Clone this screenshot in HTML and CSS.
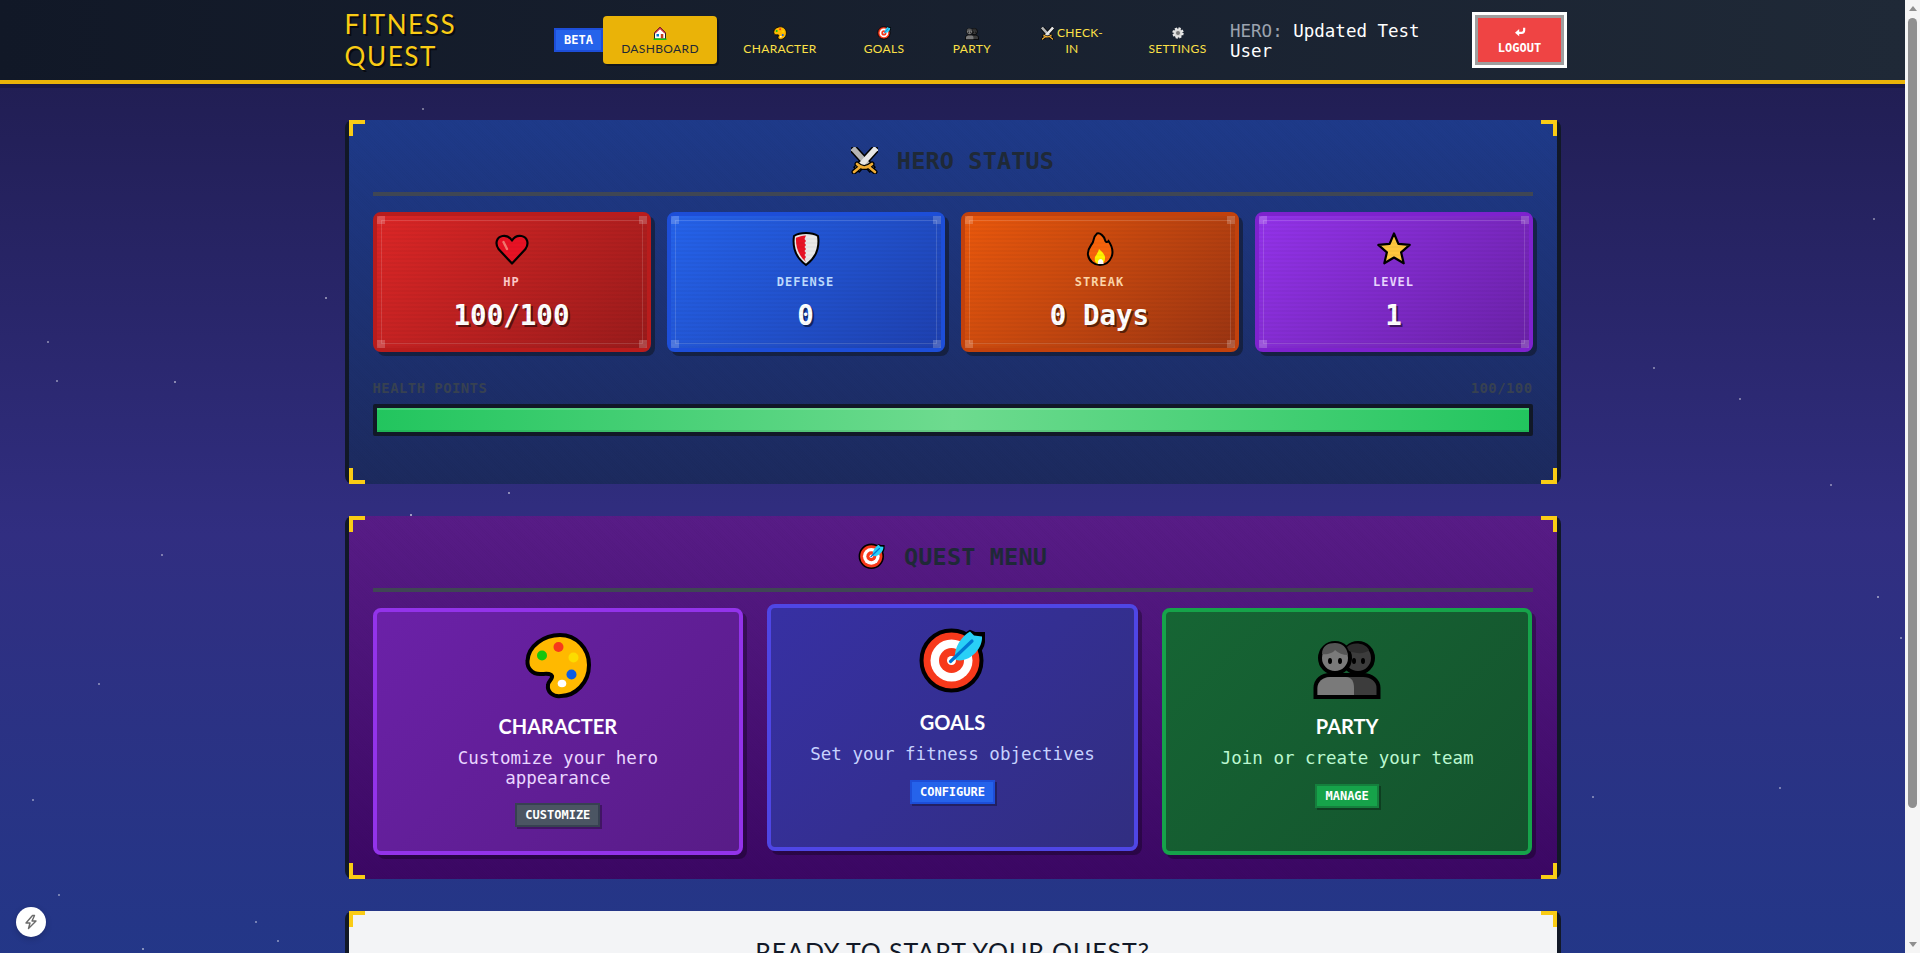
FILE: index.html
```html
<!DOCTYPE html>
<html lang="en">
<head>
<meta charset="utf-8">
<title>Fitness Quest</title>
<link rel="stylesheet" href="styles.css">
</head>
<body>
<svg class="sprite" xmlns="http://www.w3.org/2000/svg">
  <symbol id="i-swords" viewBox="0 0 27 27">
    <g stroke-linecap="round">
      <path d="M3.500 3 L19 20" stroke="#000" stroke-width="8.500" stroke-linecap="square"/>
      <path d="M23.500 3 L8 20" stroke="#000" stroke-width="8.500" stroke-linecap="square"/>
      <path d="M3.500 3 L19 20" stroke="#b5b5b5" stroke-width="5.500" stroke-linecap="square"/>
      <path d="M23.500 3 L8 20" stroke="#e6e6e6" stroke-width="5.500" stroke-linecap="square"/>
      <path d="M6 17 Q13 24 21 17 M3 25 L9 20 M24 25 L18 20" stroke="#000" stroke-width="5" fill="none"/>
      <path d="M6 17 Q13 24 21 17 M3 25 L9 20 M24 25 L18 20" stroke="#f0ad35" stroke-width="2.600" fill="none"/>
    </g>
  </symbol>
  <symbol id="i-heart" viewBox="0 0 36 36">
    <path d="M18 32.500 L4.500 18 C0.500 12 3 6 8.500 5 C12.500 4.300 16 6.300 18 9.500 C20 6.300 23.500 4.300 27.500 5 C33 6 35.500 12 31.500 18 Z" fill="#e81224" stroke="#000" stroke-width="2.200" stroke-linejoin="round"/>
    <path d="M9.500 11 L13 18" stroke="#f4796f" stroke-width="2.400" stroke-linecap="round"/>
  </symbol>
  <symbol id="i-shield" viewBox="0 0 36 36">
    <path d="M18 2 C22 2 27 3 30 5 C31.500 15 29 26 18 34 C7 26 4.500 15 6 5 C9 3 14 2 18 2Z" fill="#e9e9e9" stroke="#000" stroke-width="2"/>
    <path d="M18 4.500 C14 4.500 11 5.500 8 6.800 C7.500 15 10 24 18 31 L16.500 28 L18 26 L16.500 24 L18 22 L16.500 20 L18 18 L16.500 16 L18 14 L16.500 12 L18 10 L16.500 8Z" fill="#e81224"/>
  </symbol>
  <symbol id="i-flame" viewBox="0 0 36 36">
    <path d="M15 2.500 C18 1.500 22 5 23 9 C23.500 11 25 12 26.500 10 C30 15 31.500 21 29.500 26 C27.500 31 23 34 18 34 C12 34 7 30 6 24 C5 18 9 15 11 11 C12 8 12 5 15 2.500Z" fill="#f7630c" stroke="#000" stroke-width="2"/>
    <path d="M17 18 C19 20 22.500 22.500 23 26 C23.500 30 21 33 18 33 C14 33 12 30 13 26 C14 24 16 22 17 18Z" fill="#fff100"/>
    <path d="M18.500 28 C20.500 28 21.500 30 21.500 33 H16 C15.500 31 16.500 28 18.500 28Z" fill="#fff"/>
  </symbol>
  <symbol id="i-star" viewBox="0 0 36 36">
    <polygon points="18,2.500 22.400,12.900 33.700,13.900 25.100,21.300 27.700,32.300 18,26.500 8.300,32.300 10.900,21.300 2.300,13.900 13.600,12.900" fill="#ffc83d" stroke="#000" stroke-width="2.200" stroke-linejoin="round"/>
  </symbol>
  <symbol id="i-palette" viewBox="0 0 68 68">
    <path d="M36 4 C52 4 65 17 65 34 C65 52 51 65 37 65 C29 66 23 61 24 54 C24 50 29 48 28 45 C27 42 22 43 16 43 C8 43 3 37 3.500 30 C4 15 20 4 36 4Z" fill="#ffb900" stroke="#000" stroke-width="4"/>
    <circle cx="34.500" cy="16" r="5" fill="#f7391b"/>
    <circle cx="18" cy="24.500" r="5" fill="#16c60c"/>
    <circle cx="49.500" cy="26.500" r="5" fill="#fcdc00"/>
    <circle cx="47.500" cy="43.500" r="5" fill="#0b5ce6"/>
    <ellipse cx="38" cy="52.500" rx="4.300" ry="3.800" fill="#fff"/>
  </symbol>
  <symbol id="i-target" viewBox="0 0 68 68">
    <path d="M37 30 C37 20 44 9 52 5 L57 7 L65 7 L65 15 C64 25 50 35 39 34Z" fill="#000" stroke="#000" stroke-width="4"/>
    <circle cx="33.500" cy="33.500" r="30" fill="#f7391b" stroke="#000" stroke-width="4"/>
    <circle cx="33.500" cy="33.500" r="21" fill="#fff"/>
    <circle cx="33.500" cy="33.500" r="12.500" fill="#f7391b"/>
    <circle cx="33.500" cy="33.500" r="4.500" fill="#fff"/>
    <path d="M37 31 C36 20 44 9 52 4.500 L56 8.500 L64 9.500 C65 21 52 36 38 33Z" fill="#29d0f7"/>
    <path d="M32.500 34.500 L54 14" stroke="#0078d4" stroke-width="3.200" stroke-linecap="round"/>
  </symbol>
  <symbol id="i-people" viewBox="0 0 68 68">
    <path d="M2.500 66 V57 C2.500 49 9 44 17 44 H50 C58 44 65.500 49 65.500 57 V66Z" fill="#3c3c3c" stroke="#000" stroke-width="4"/>
    <circle cx="45" cy="27" r="15" fill="#3c3c3c" stroke="#000" stroke-width="4"/>
    <circle cx="22" cy="27" r="15" fill="#7a7a7a" stroke="#000" stroke-width="4"/>
    <path d="M9 23 C9 15 15 12 22 12 C29 12 34 16 35 24 C30 24 25 22 22 19 C20 22 14 24 9 23Z" fill="#555"/>
    <path d="M34 16 C38 11 52 11 56 19 C52 23 44 23 36 20Z" fill="#2c2c2c"/>
    <path d="M4.500 64 V57 C4.500 51 10 46 17 46 H33 C39 46 41 51 41 57 V64Z" fill="#7a7a7a"/>
    <ellipse cx="17" cy="30" rx="2" ry="3" fill="#000"/>
    <ellipse cx="27" cy="30" rx="2" ry="3" fill="#000"/>
    <ellipse cx="41" cy="30" rx="2" ry="3" fill="#000"/>
    <ellipse cx="50" cy="30" rx="2" ry="3" fill="#000"/>
  </symbol>
  <symbol id="i-house" viewBox="0 0 14 14">
    <path d="M7 1 L1.500 6.500 V13 H12.500 V6.500Z" fill="#fff" stroke="#222" stroke-width="1"/>
    <path d="M7 1 L1 7 L2.500 7.500 L7 3.300 L11.500 7.500 L13 7Z" fill="#d13438"/>
    <rect x="3.500" y="8" width="2.500" height="2.500" fill="#0078d4"/>
    <rect x="7.800" y="8" width="2.500" height="4.500" fill="#c43e1c"/>
    <rect x="0.500" y="12.500" width="13" height="1.500" fill="#16c60c"/>
  </symbol>
  <symbol id="i-gear" viewBox="0 0 14 14">
    <circle cx="7" cy="7" r="4.500" fill="#d9d9d9" stroke="#e8e8e8" stroke-width="2.400" stroke-dasharray="2.100 1.430"/>
    <circle cx="7" cy="7" r="2" fill="#777"/>
  </symbol>
  <symbol id="i-return" viewBox="0 0 14 12">
    <path d="M12 1 V4 C12 6 11 7 9 7 H4" fill="none" stroke="#fff" stroke-width="2.600"/>
    <path d="M6 2.500 L1 7 L6 11Z" fill="#fff"/>
  </symbol>
  <symbol id="i-bolt" viewBox="0 0 16 16">
    <path d="M9.500 1.500 L3 9 H7 L5.500 14.500 L13 7 H9 L11.500 1.500Z" fill="none" stroke="#6b6b6b" stroke-width="1.400" stroke-linejoin="round"/>
  </symbol>
</svg>

<div class="stars"></div>

<header class="topbar">
  <div class="topbar-inner">
    <div class="logo">FITNESS QUEST</div>
    <span class="beta">BETA</span>
    <nav class="nav">
      <a class="nav-link nav-link-active"><svg class="nav-icon"><use href="#i-house"/></svg>DASHBOARD</a>
      <a class="nav-link"><svg class="nav-icon"><use href="#i-palette"/></svg>CHARACTER</a>
      <a class="nav-link"><svg class="nav-icon"><use href="#i-target"/></svg>GOALS</a>
      <a class="nav-link"><svg class="nav-icon"><use href="#i-people"/></svg>PARTY</a>
      <a class="nav-link"><span class="nav-line"><svg class="nav-icon-inline"><use href="#i-swords"/></svg>CHECK-</span><span>IN</span></a>
      <a class="nav-link"><svg class="nav-icon"><use href="#i-gear"/></svg>SETTINGS</a>
    </nav>
    <div class="hero-name"><span class="hero-tag">HERO:</span> Updated Test User</div>
    <button class="logout"><svg class="logout-icon"><use href="#i-return"/></svg>LOGOUT</button>
  </div>
</header>

<main class="main">
  <section class="panel">
    <div class="panel-body panel-blue">
      <i class="corner corner-tl"></i><i class="corner corner-tr"></i><i class="corner corner-bl"></i><i class="corner corner-br"></i>
      <h2 class="panel-title"><svg class="title-icon"><use href="#i-swords"/></svg><span class="title-text">HERO STATUS</span></h2>
      <div class="stats">
        <div class="stat stat-red">
          <svg class="stat-icon"><use href="#i-heart"/></svg>
          <div class="stat-label">HP</div>
          <div class="stat-value">100/100</div>
        </div>
        <div class="stat stat-blue">
          <svg class="stat-icon"><use href="#i-shield"/></svg>
          <div class="stat-label">DEFENSE</div>
          <div class="stat-value">0</div>
        </div>
        <div class="stat stat-orange">
          <svg class="stat-icon"><use href="#i-flame"/></svg>
          <div class="stat-label">STREAK</div>
          <div class="stat-value">0 Days</div>
        </div>
        <div class="stat stat-purple">
          <svg class="stat-icon"><use href="#i-star"/></svg>
          <div class="stat-label">LEVEL</div>
          <div class="stat-value">1</div>
        </div>
      </div>
      <div class="hp-head"><span>HEALTH POINTS</span><span>100/100</span></div>
      <div class="hp-track"><div class="hp-fill"></div></div>
    </div>
  </section>

  <section class="panel">
    <div class="panel-body panel-violet">
      <i class="corner corner-tl"></i><i class="corner corner-tr"></i><i class="corner corner-bl"></i><i class="corner corner-br"></i>
      <h2 class="panel-title"><svg class="title-icon"><use href="#i-target"/></svg><span class="title-text">QUEST MENU</span></h2>
      <div class="quests">
        <article class="quest quest-purple">
          <svg class="quest-icon"><use href="#i-palette"/></svg>
          <h3 class="quest-title">CHARACTER</h3>
          <p class="quest-text">Customize your hero appearance</p>
          <button class="quest-btn quest-btn-gray">CUSTOMIZE</button>
        </article>
        <article class="quest quest-indigo">
          <svg class="quest-icon"><use href="#i-target"/></svg>
          <h3 class="quest-title">GOALS</h3>
          <p class="quest-text">Set your fitness objectives</p>
          <button class="quest-btn quest-btn-blue">CONFIGURE</button>
        </article>
        <article class="quest quest-green">
          <svg class="quest-icon"><use href="#i-people"/></svg>
          <h3 class="quest-title">PARTY</h3>
          <p class="quest-text">Join or create your team</p>
          <button class="quest-btn quest-btn-green">MANAGE</button>
        </article>
      </div>
    </div>
  </section>

  <section class="panel">
    <div class="panel-body panel-light">
      <i class="corner corner-tl"></i><i class="corner corner-tr"></i><i class="corner corner-bl"></i><i class="corner corner-br"></i>
      <h2 class="cta-title">READY TO START YOUR QUEST?</h2>
    </div>
  </section>
</main>

<button class="dev-badge" aria-label="Open dev tools"><svg class="dev-icon"><use href="#i-bolt"/></svg></button>

<div class="scrollbar">
  <i class="scroll-arrow scroll-arrow-up"></i>
  <i class="scroll-thumb"></i>
  <i class="scroll-arrow scroll-arrow-down"></i>
</div>
</body>
</html>
```
FILE: styles.css
```css
* { box-sizing: border-box; }
html, body { margin: 0; padding: 0; }
body {
  position: relative;
  padding-right: 15px;
  font-family: "DejaVu Sans Mono", monospace;
  color: #fff;
  background: linear-gradient(180deg, #1e1b4b 0%, #312e81 48%, #1e3a8a 100%);
}
.sprite { display: none; }

.stars {
  position: absolute;
  left: 0;
  top: 0;
  width: 2px;
  height: 2px;
  border-radius: 50%;
  pointer-events: none;
  box-shadow:
    325px 297px 0 rgba(255,255,255,.6), 47px 341px 0 rgba(255,255,255,.5), 56px 380px 0 rgba(255,255,255,.5),
    174px 381px 0 rgba(255,255,255,.6), 161px 554px 0 rgba(255,255,255,.5), 98px 683px 0 rgba(255,255,255,.5),
    32px 799px 0 rgba(255,255,255,.5), 58px 894px 0 rgba(255,255,255,.5), 255px 921px 0 rgba(255,255,255,.5),
    277px 940px 0 rgba(255,255,255,.5), 142px 948px 0 rgba(255,255,255,.6), 422px 108px 0 rgba(255,255,255,.5),
    508px 492px 0 rgba(255,255,255,.6), 410px 514px 0 rgba(255,255,255,.7), 1739px 398px 0 rgba(255,255,255,.5),
    1877px 596px 0 rgba(255,255,255,.6), 1900px 637px 0 rgba(255,255,255,.5), 1779px 787px 0 rgba(255,255,255,.5),
    1830px 484px 0 rgba(255,255,255,.5), 1873px 218px 0 rgba(255,255,255,.5), 1653px 367px 0 rgba(255,255,255,.5),
    1592px 796px 0 rgba(255,255,255,.5);
}

/* top bar */
.topbar {
  position: relative;
  height: 84px;
  background: linear-gradient(90deg, #111827, #1f2937);
  border-bottom: 4px solid #eab308;
  box-shadow: 0 4px 0 rgba(0,0,0,.2);
}
.topbar-inner {
  display: flex;
  align-items: center;
  max-width: 1280px;
  height: 80px;
  margin: 0 auto;
  padding: 0 32px;
}
.logo {
  flex: 0 0 209.5px;
  width: 209.5px;
  padding-right: 80px;
  font-family: Lato, sans-serif;
  font-size: 26px;
  line-height: 32px;
  letter-spacing: 1.6px;
  color: #facc15;
  text-shadow: 2px 2px 0 rgba(0,0,0,.6);
}
.beta {
  flex: 0 0 49px;
  height: 24px;
  line-height: 20px;
  text-align: center;
  font-size: 12px;
  font-weight: 700;
  background: #2563eb;
  border: 2px solid #1d4ed8;
}
.nav {
  flex: 0 0 627px;
  display: grid;
  grid-template-columns: 114px 126px 82px 94px 106px 105px;
  align-items: center;
  height: 48px;
}
.nav-link {
  display: flex;
  flex-direction: column;
  align-items: center;
  justify-content: center;
  height: 48px;
  padding-top: 2px;
  font-family: Lato, sans-serif;
  font-size: 12px;
  line-height: 16px;
  letter-spacing: .35px;
  color: #fde047;
}
.nav-link-active {
  background: #eab308;
  color: #1f2937;
  border-radius: 4px;
  box-shadow: 2px 2px 0 rgba(0,0,0,.3);
}
.nav-icon { width: 14px; height: 14px; margin-bottom: 1px; }
.nav-line { display: flex; align-items: center; gap: 3px; }
.nav-icon-inline { width: 13px; height: 13px; }
.hero-name {
  flex: 0 0 245px;
  padding: 2px 30px 0 0;
  font-size: 17.5px;
  line-height: 20px;
  color: #fff;
}
.hero-tag { color: #9ca3af; }
.logout {
  flex: 0 0 89px;
  display: flex;
  flex-direction: column;
  align-items: center;
  justify-content: center;
  gap: 3px;
  height: 50px;
  padding: 3px 0 0;
  font-family: "DejaVu Sans Mono", monospace;
  font-size: 12px;
  font-weight: 700;
  line-height: 16px;
  color: #fff;
  background: #ef4444;
  border: 3px solid #9e9e9e;
  box-shadow: 0 0 0 3px #fff;
}
.logout-icon { width: 12px; height: 10px; }

/* main column */
.main {
  display: flex;
  flex-direction: column;
  gap: 32px;
  max-width: 1280px;
  margin: 0 auto;
  padding: 36px 32px 32px;
}
.panel {
  padding: 0 4px;
  background: #111827;
  border-radius: 8px;
}
.panel-body {
  position: relative;
  padding: 24px;
}
.panel-blue {
  padding-bottom: 48px;
  background:
    repeating-linear-gradient(45deg, rgba(0,0,0,.02) 0 1px, transparent 1px 2px),
    linear-gradient(180deg, #1e3a8a, #1c2a5e);
}
.panel-violet {
  background:
    repeating-linear-gradient(45deg, rgba(0,0,0,.02) 0 1px, transparent 1px 2px),
    linear-gradient(180deg, #581c87, #3b0764);
}
.panel-light {
  height: 170px;
  background: #f3f4f6;
}
.corner {
  position: absolute;
  width: 16px;
  height: 16px;
  border: 0 solid #facc15;
}
.corner-tl { left: 0; top: 0; border-width: 4px 0 0 4px; }
.corner-tr { right: 0; top: 0; border-width: 4px 4px 0 0; }
.corner-bl { left: 0; bottom: 0; border-width: 0 0 4px 4px; }
.corner-br { right: 0; bottom: 0; border-width: 0 4px 4px 0; }

.panel-title {
  display: flex;
  align-items: center;
  justify-content: center;
  gap: 19px;
  box-sizing: content-box;
  height: 32px;
  margin: 0 0 16px;
  padding-bottom: 16px;
  border-bottom: 4px solid #3f4654;
  font-size: 23.5px;
  line-height: 32px;
  letter-spacing: .15px;
  font-weight: 700;
  color: #1f2937;
}
.title-icon { width: 27px; height: 27px; }
.title-text { padding-top: 2px; }

/* stat cards */
.stats {
  display: grid;
  grid-template-columns: repeat(4, 1fr);
  gap: 16px;
}
.stat {
  position: relative;
  height: 140px;
  padding: 15px 0 17px;
  text-align: center;
  border: 4px solid;
  border-radius: 8px;
  box-shadow: 4px 4px 0 rgba(17,24,39,.6);
}
.stat::before {
  content: "";
  position: absolute;
  inset: 4px;
  border: 1px solid rgba(255,255,255,.15);
  pointer-events: none;
}
.stat::after {
  content: "";
  position: absolute;
  inset: 0;
  pointer-events: none;
  background:
    linear-gradient(rgba(255,255,255,.2), rgba(255,255,255,.2)) 0 0 / 8px 8px no-repeat,
    linear-gradient(rgba(255,255,255,.2), rgba(255,255,255,.2)) 100% 0 / 8px 8px no-repeat,
    linear-gradient(rgba(255,255,255,.2), rgba(255,255,255,.2)) 0 100% / 8px 8px no-repeat,
    linear-gradient(rgba(255,255,255,.2), rgba(255,255,255,.2)) 100% 100% / 8px 8px no-repeat,
    repeating-linear-gradient(0deg, rgba(0,0,0,.03) 0 2px, transparent 2px 4px);
}
.stat-red { background: linear-gradient(135deg, #dc2626, #991b1b); border-color: #b91c1c; }
.stat-blue { background: linear-gradient(135deg, #2563eb, #1e40af); border-color: #1d4ed8; }
.stat-orange { background: linear-gradient(135deg, #ea580c, #9a3412); border-color: #c2410c; }
.stat-purple { background: linear-gradient(135deg, #9333ea, #6b21a8); border-color: #7e22ce; }
.stat-icon { display: block; width: 36px; height: 36px; margin: 0 auto 7px; }
.stat-label {
  font-size: 12px;
  line-height: 16px;
  font-weight: 700;
  letter-spacing: 1px;
  margin-bottom: 9px;
}
.stat-red .stat-label { color: #fecaca; }
.stat-blue .stat-label { color: #bfdbfe; }
.stat-orange .stat-label { color: #fed7aa; }
.stat-purple .stat-label { color: #e9d5ff; }
.stat-value {
  font-size: 27.5px;
  line-height: 32px;
  font-weight: 700;
  color: #fff;
  text-shadow: 2px 2px 0 rgba(0,0,0,.5);
}

/* health bar */
.hp-head {
  display: flex;
  justify-content: space-between;
  margin-top: 26px;
  margin-bottom: 6px;
  font-size: 14px;
  line-height: 20px;
  font-weight: 700;
  letter-spacing: .4px;
  color: #374151;
}
.hp-track {
  height: 32px;
  background: #111827;
  border: 4px solid #111827;
  border-radius: 2px;
}
.hp-fill {
  height: 100%;
  background: linear-gradient(90deg, #22c55e, #6edb8f 50%, #22c55e);
  box-shadow: inset 0 2px 0 rgba(255,255,255,.15), inset 0 -2px 0 rgba(0,0,0,.08);
}

/* quest cards */
.quests {
  display: grid;
  grid-template-columns: repeat(3, 1fr);
  gap: 24px;
}
.quest {
  padding: 19px 24px 24px;
  text-align: center;
  border: 4px solid;
  border-radius: 8px;
  box-shadow: 4px 4px 0 rgba(0,0,0,.3);
}
.quest-purple { background: linear-gradient(135deg, #6b21a8, #581c87); border-color: #9333ea; color: #e9d5ff; }
.quest-indigo { background: linear-gradient(135deg, #3730a3, #312e81); border-color: #4f46e5; color: #c7d2fe; transform: translateY(-4px); }
.quest-green { background: linear-gradient(135deg, #166534, #14532d); border-color: #16a34a; color: #bbf7d0; }
.quest-icon { display: block; width: 68px; height: 68px; margin: 0 auto; }
.quest-title {
  margin: 13px 0 9px;
  font-family: Lato, sans-serif;
  font-size: 20px;
  line-height: 28px;
  font-weight: 700;
  color: #fff;
}
.quest-text {
  margin: 0 0 15px;
  font-size: 17.5px;
  line-height: 19.5px;
}
.quest-btn {
  display: block;
  margin: 0 auto;
  height: 24px;
  padding: 0 8px;
  font-family: "DejaVu Sans Mono", monospace;
  font-size: 12px;
  font-weight: 700;
  line-height: 20px;
  color: #fff;
  border: 2px solid;
  box-shadow: 2px 2px 0 rgba(0,0,0,.3);
}
.quest-btn-gray { background: #4b5563; border-color: #374151; }
.quest-btn-blue { background: #2563eb; border-color: #1d4ed8; }
.quest-btn-green { background: #16a34a; border-color: #15803d; }

.cta-title {
  margin: 0;
  text-align: center;
  font-family: Lato, sans-serif;
  font-size: 25px;
  line-height: 32px;
  letter-spacing: .9px;
  font-weight: 400;
  color: #111827;
}

.dev-badge {
  position: fixed;
  left: 16px;
  bottom: 16px;
  display: flex;
  align-items: center;
  justify-content: center;
  width: 30px;
  height: 30px;
  padding: 0;
  background: #fff;
  border: 0;
  border-radius: 50%;
  box-shadow: 0 2px 6px rgba(0,0,0,.2);
}
.dev-icon { width: 16px; height: 16px; }

/* window scrollbar, drawn over the page edge */
.scrollbar {
  position: fixed;
  top: 0;
  right: 0;
  bottom: 0;
  width: 15px;
  display: flex;
  flex-direction: column;
  align-items: center;
  background: #f5f5f5;
}
.scroll-arrow {
  flex: none;
  width: 0;
  height: 0;
  border-left: 4.5px solid transparent;
  border-right: 4.5px solid transparent;
}
.scroll-arrow-up { margin-top: 6px; border-bottom: 5px solid #8f8f8f; }
.scroll-arrow-down { margin: auto 0 6px; border-top: 5px solid #8f8f8f; }
.scroll-thumb {
  flex: none;
  width: 9px;
  height: 790px;
  margin-top: 7px;
  background: #8f8f8f;
  border-radius: 5px;
}
```
